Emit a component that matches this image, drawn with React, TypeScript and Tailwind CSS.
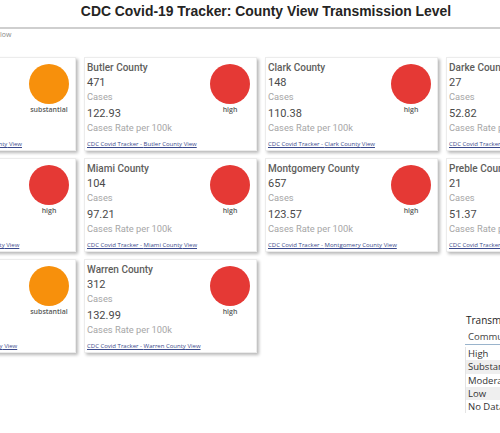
import React from 'react';

type County = {
  name: string;
  cases: string;
  rate: string;
  level: 'high' | 'substantial';
};

const rows: County[][] = [
  [
    { name: 'Auglaize County', cases: '58', rate: '125.44', level: 'substantial' },
    { name: 'Butler County', cases: '471', rate: '122.93', level: 'high' },
    { name: 'Clark County', cases: '148', rate: '110.38', level: 'high' },
    { name: 'Darke County', cases: '27', rate: '52.82', level: 'high' },
  ],
  [
    { name: 'Greene County', cases: '190', rate: '113.70', level: 'high' },
    { name: 'Miami County', cases: '104', rate: '97.21', level: 'high' },
    { name: 'Montgomery County', cases: '657', rate: '123.57', level: 'high' },
    { name: 'Preble County', cases: '21', rate: '51.37', level: 'high' },
  ],
  [
    { name: 'Shelby County', cases: '33', rate: '67.71', level: 'substantial' },
    { name: 'Warren County', cases: '312', rate: '132.99', level: 'high' },
  ],
];

const CountyCard = ({ county }: { county: County }) => (
  <div className="w-[173px] h-[94px] shrink-0 flex bg-white border border-[#ececec] shadow-[2px_2px_3px_rgba(0,0,0,0.28)] pl-[2px] pt-[3px]">
    <div className="flex-1 min-w-0 flex flex-col items-start font-['Roboto',sans-serif] whitespace-nowrap">
      <div className="h-[14px] leading-[14px] text-[10px] font-medium text-[#605e5c]">{county.name}</div>
      <div className="h-[15px] leading-[15px] text-[11px] text-[#4a4a4a]">{county.cases}</div>
      <div className="h-[14px] leading-[14px] text-[9.3px] text-[#a6a6a6]">Cases</div>
      <div className="mt-[2px] h-[16px] leading-[16px] text-[11px] text-[#4a4a4a]">{county.rate}</div>
      <div className="h-[12px] leading-[12px] text-[9.3px] text-[#a6a6a6]">Cases Rate per 100k</div>
      <a className="mt-[5px] h-[10px] leading-[10px] text-[6px] text-[#3b4a8c] underline font-['Open_Sans',sans-serif]" href="#">
        CDC Covid Tracker - {county.name} View
      </a>
    </div>
    <div className="w-[40px] mr-[6px] pt-[3px] flex flex-col items-center">
      <div className={county.level === 'high' ? 'w-[40px] h-[40px] rounded-full bg-[#e53935]' : 'w-[40px] h-[40px] rounded-full bg-[#f7900c]'} />
      <div className="mt-[1px] h-[10px] leading-[10px] text-[7px] font-semibold text-[#5a5a5a] font-['Open_Sans',sans-serif] whitespace-nowrap">
        {county.level}
      </div>
    </div>
  </div>
);

const legendItems = ['High', 'Substantial', 'Moderate', 'Low', 'No Data'];

const Legend = () => (
  <div className="ml-[200px] mt-[55px] w-[70px] shrink-0 font-['Open_Sans',sans-serif] whitespace-nowrap">
    <div className="h-[13px] leading-[13px] text-[10px] text-[#252423] pl-[1px]">Transmission Level</div>
    <div className="mt-[1px] h-[17px] leading-[17px] text-[9.5px] text-[#444] pl-[3px] border-b border-[#9ab4cc]">
      Community Transmission
    </div>
    <div className="mt-[2px] border-l border-[#e4e4e4]">
      {legendItems.map((item, i) => (
        <div
          key={item}
          className={i % 2 === 1 ? 'h-[13.3px] leading-[13.3px] text-[9.5px] text-[#333] pl-[2px] bg-[#efefef]' : 'h-[13.3px] leading-[13.3px] text-[9.5px] text-[#333] pl-[2px]'}
        >
          {item}
        </div>
      ))}
    </div>
  </div>
);

export default function App() {
  return (
    <div className="w-[500px] h-[433px] overflow-hidden bg-white">
      <div className="h-[29px] pl-[32px] flex justify-center border-b-2 border-[#cfcfcf]">
        <h1 className="leading-[22px] text-[13.9px] font-bold text-[#252423] font-['Liberation_Sans',Arial,sans-serif]">
          CDC Covid-19 Tracker: County View Transmission Level
        </h1>
      </div>
      <div className="h-[11px] leading-[11px] text-[7px] text-[#8a8a8a] font-['Open_Sans',sans-serif]">low</div>

      <div className="ml-[-97px] mt-[17px] flex flex-col gap-[7px]">
        {rows.map((row, r) => (
          <div key={r} className="flex gap-[8px] items-start">
            {row.map((c) => (
              <CountyCard key={c.name} county={c} />
            ))}
            {r === 2 && <Legend />}
          </div>
        ))}
      </div>
    </div>
  );
}
